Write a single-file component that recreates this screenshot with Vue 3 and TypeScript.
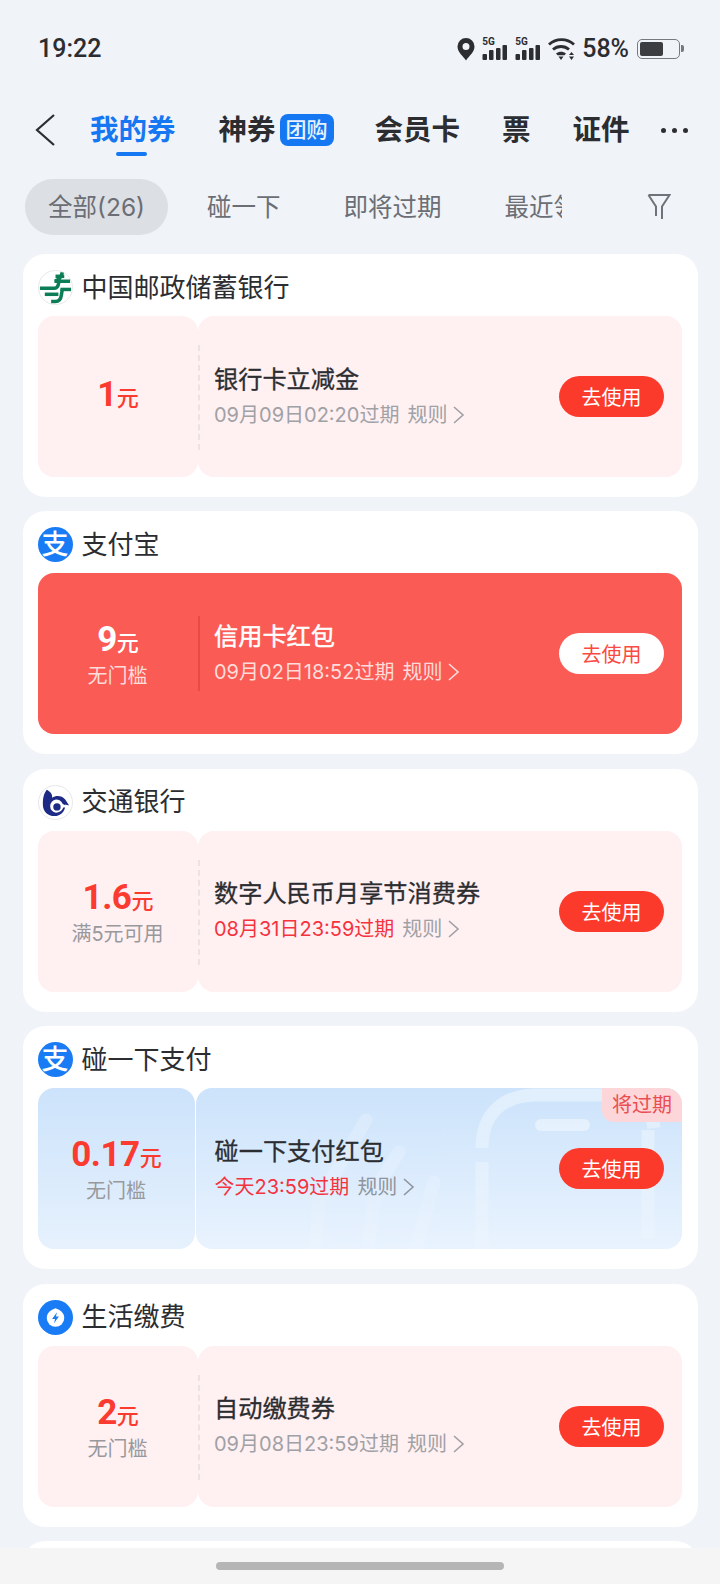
<script setup lang="ts">
interface Coupon {
  brand: string
  logo: 'psbc' | 'alipay' | 'bocom' | 'life'
  amount: string
  sub?: string
  title: string
  date: string
  urgent?: boolean
  theme: 'pink' | 'red' | 'blue'
  tag?: string
}

const tabs = ['碰一下', '即将过期', '最近领取']

const coupons: Coupon[] = [
  { brand: '中国邮政储蓄银行', logo: 'psbc', amount: '1', title: '银行卡立减金', date: '09月09日02:20过期', theme: 'pink' },
  { brand: '支付宝', logo: 'alipay', amount: '9', sub: '无门槛', title: '信用卡红包', date: '09月02日18:52过期', theme: 'red' },
  { brand: '交通银行', logo: 'bocom', amount: '1.6', sub: '满5元可用', title: '数字人民币月享节消费券', date: '08月31日23:59过期', urgent: true, theme: 'pink' },
  { brand: '碰一下支付', logo: 'alipay', amount: '0.17', sub: '无门槛', title: '碰一下支付红包', date: '今天23:59过期', urgent: true, theme: 'blue', tag: '将过期' },
  { brand: '生活缴费', logo: 'life', amount: '2', sub: '无门槛', title: '自动缴费券', date: '09月08日23:59过期', theme: 'pink' },
]
</script>

<template>
  <div class="page">
    <div class="status">
      <span class="time">19:22</span>
      <div class="status-right">
        <svg width="18" height="24" viewBox="0 0 18 24"><path fill-rule="evenodd" fill="#2b2d31" d="M9 1a8.500 8.500 0 0 1 8.500 8.500C17.500 15 12 19 9 23.500 6 19 .5 15 .5 9.500A8.500 8.500 0 0 1 9 1zm0 5a3.500 3.500 0 1 0 0 7 3.500 3.500 0 0 0 0-7z" /></svg>
        <div class="sim">
          <span class="sim-label">5G</span>
          <svg width="26" height="24" viewBox="0 0 26 24"><g fill="#2b2d31"><rect x="0.500" y="17" width="4.500" height="6" rx="1" /><rect x="7" y="13" width="4.500" height="10" rx="1" /><rect x="14" y="11" width="4.500" height="12" rx="1" /><rect x="20.500" y="8" width="4.500" height="15" rx="1" /></g></svg>
        </div>
        <div class="sim">
          <span class="sim-label">5G</span>
          <svg width="26" height="24" viewBox="0 0 26 24"><g fill="#2b2d31"><rect x="0.500" y="17" width="4.500" height="6" rx="1" /><rect x="7" y="13" width="4.500" height="10" rx="1" /><rect x="14" y="11" width="4.500" height="12" rx="1" /><rect x="20.500" y="8" width="4.500" height="15" rx="1" /></g></svg>
        </div>
        <svg width="27" height="24" viewBox="0 0 27 24"><g fill="none" stroke="#2b2d31" stroke-width="2.800"><path d="M1 7.500c7-6.500 18-6.500 25 0" /><path d="M5 12.500c4.500-4 11.500-4 16 0" /></g><path fill="#2b2d31" d="M8 16.500c3-2.300 7-2.300 10 0l-1.500 1.800h-7zM10.500 19.500h5L13 23zM21 18l2.500-3 2.500 3zM21 19.500h5L23.500 23z" /></svg>
        <span class="pct">58%</span>
        <div class="battery">
          <div class="battery-fill"></div>
        </div>
      </div>
    </div>

    <div class="nav">
      <svg class="back" width="22" height="34" viewBox="0 0 22 34"><path d="M20 2 3 17l17 15" fill="none" stroke="#2b2d31" stroke-width="2.200" /></svg>
      <div class="nav-item active">
        我的券
        <span class="nav-line"></span>
      </div>
      <div class="nav-item god">神券<span class="nav-badge">团购</span></div>
      <div class="nav-item member">会员卡</div>
      <div class="nav-item ticket">票</div>
      <div class="nav-item cert">证件</div>
      <div class="dots"><i></i><i></i><i></i></div>
    </div>

    <div class="filters">
      <div class="filter-scroll">
        <span class="chip on">全部(26)</span>
        <span v-for="t in tabs" :key="t" class="chip">{{ t }}</span>
      </div>
      <svg class="funnel" width="24" height="28" viewBox="0 0 24 28"><path d="M1.500 2h21L15 13.500V26M9 23V13.500L1.500 2" fill="none" stroke="#6f7278" stroke-width="2" /></svg>
    </div>

    <div class="list">
      <section v-for="c in coupons" :key="c.title" class="card">
        <header class="brand">
          <svg v-if="c.logo === 'psbc'" class="logo" viewBox="0 0 36 36">
            <circle cx="18" cy="18" r="17.500" fill="#fff" stroke="#e4e6e8" />
            <g fill="none" stroke="#0c7d55" stroke-width="3.600">
              <path d="M18 6.500H27" />
              <path d="M25 2.500C24 7 22 10.500 17 11.500H33" />
              <path d="M2 18.700H17C20 18.700 21 16 21.500 12" />
              <path d="M7 25H21" />
              <path d="M23 20H34" />
              <path d="M13.500 32.500H18C22 32.500 23.500 30 24 26L25 20" />
            </g>
          </svg>
          <div v-else-if="c.logo === 'alipay'" class="logo alipay">支</div>
          <svg v-else-if="c.logo === 'bocom'" class="logo" viewBox="0 0 36 36">
            <circle cx="18" cy="18" r="17.500" fill="#fff" stroke="#e4e6e8" />
            <path fill="#1d2a86" d="M9 5c4 2 6 5 5.500 8 4-2.500 10-2.500 13.500 2l4 6-4-1c.5 7-5 12-11 12-7 0-12-5-12-12C5 13 6 9 9 5z" />
            <path fill="#fff" d="M18.500 15c3 0 5.500 1.500 7 4.500L32 23l-6 .2c-1 3.300-4 5.300-7.500 5.300a6.800 6.800 0 0 1 0-13.500z" />
            <circle cx="19.500" cy="22.500" r="3.800" fill="#1d2a86" />
          </svg>
          <svg v-else class="logo" viewBox="0 0 36 36">
            <circle cx="18" cy="18" r="18" fill="#1a7cf5" />
            <path fill="#fff" d="M18 8.500c5 1.500 9 5 9 10a9 9 0 0 1-18 0c0-5 4-8.500 9-10z" />
            <path fill="#1a7cf5" d="M19.500 12.500 14.500 19.500h3l-1 4.500 5-7h-3z" />
          </svg>
          <span class="brand-name">{{ c.brand }}</span>
        </header>

        <div class="coupon" :class="'theme-' + c.theme">
          <div class="stub" :class="{ 'has-sub': c.sub }">
            <div class="amount"><b>{{ c.amount }}</b><span>元</span></div>
            <div v-if="c.sub" class="sub">{{ c.sub }}</div>
          </div>
          <div class="main">
            <svg v-if="c.theme === 'blue'" class="wm" width="486" height="161" viewBox="0 0 486 161">
              <defs>
                <linearGradient id="fade" gradientUnits="userSpaceOnUse" x1="0" y1="0" x2="0" y2="161">
                  <stop offset="0" stop-color="#fff" stop-opacity=".42" />
                  <stop offset="1" stop-color="#fff" stop-opacity=".1" />
                </linearGradient>
              </defs>
              <g fill="none" stroke="url(#fade)" stroke-width="13">
                <path d="M286 60C286 25 308 7 340 7H420C446 7 456 22 458 40" />
                <path d="M286 74V161" />
                <path d="M452 42V150" />
                <g opacity=".6" stroke-linecap="round" stroke-linejoin="round">
                  <path d="M170 32 123 112 119 161" />
                  <path d="M203 64 180 100 172 161" />
                  <path d="M238 94 222 152 218 161" />
                </g>
              </g>
              <rect x="339" y="31" width="55" height="12" rx="6" fill="#fff" fill-opacity=".42" />
            </svg>
            <div class="info">
              <div class="title">{{ c.title }}</div>
              <div class="meta">
                <span class="date" :class="{ urgent: c.urgent }">{{ c.date }}</span>
                <span class="rule">规则</span>
                <svg class="chev" width="13" height="20" viewBox="0 0 13 20"><path d="m2 2 9 8-9 8" fill="none" stroke="currentColor" stroke-width="1.600" /></svg>
              </div>
            </div>
            <button class="use">去使用</button>
            <span v-if="c.tag" class="tag">{{ c.tag }}</span>
          </div>
        </div>
      </section>
      <section class="card"></section>
    </div>

    <div class="home-bar"><span></span></div>
  </div>
</template>

<style>
html, body { margin: 0; background: #f0f3f8; }
</style>

<style scoped>
.page {
  position: relative;
  width: 720px;
  height: 1584px;
  overflow: hidden;
  background: #f0f3f8;
  font-family: Inter, "Noto Sans CJK SC", sans-serif;
  color: #2b2d31;
}
.status {
  height: 96px;
  box-sizing: border-box;
  padding: 35px 37px 0 38px;
  display: flex;
  justify-content: space-between;
  align-items: flex-start;
}
.time { font: 500 25px/28px Roboto, sans-serif; }
.status-right { display: flex; align-items: center; gap: 7px; height: 28px; }
.sim { position: relative; width: 26px; height: 24px; }
.sim svg { display: block; }
.sim-label {
  position: absolute;
  left: 0;
  top: 0;
  font: 700 10px/10px Roboto, sans-serif;
}
.pct { font: 500 25px/28px Roboto, sans-serif; margin-right: 1px; }
.battery {
  position: relative;
  width: 43px;
  height: 20px;
  box-sizing: border-box;
  border: 1.500px solid #77797e;
  border-radius: 5px;
  padding: 2px;
  margin-right: 3px;
}
.battery::after {
  content: "";
  position: absolute;
  right: -5px;
  top: 5px;
  width: 3px;
  height: 7px;
  border-radius: 0 2px 2px 0;
  background: #77797e;
}
.battery-fill { width: 23px; height: 100%; background: #3c3d41; border-radius: 2px; }

.nav {
  height: 68px;
  padding-left: 34px;
  display: flex;
  align-items: center;
  position: relative;
  box-sizing: border-box;
}
.back { margin-right: 34px; }
.nav-item {
  position: relative;
  font-size: 28.500px;
  font-weight: 700;
  line-height: 36px;
  white-space: nowrap;
  display: flex;
  align-items: center;
}
.nav-item.active { color: #1677f2; }
.nav-line {
  position: absolute;
  left: 26px;
  top: 40px;
  width: 31px;
  height: 4px;
  border-radius: 2px;
  background: #1677f2;
}
.god { margin-left: 43px; }
.nav-badge {
  margin-left: 4px;
  width: 54px;
  height: 32px;
  border-radius: 8px;
  background: #1677f2;
  color: #e8f2ff;
  font-size: 21px;
  font-weight: 500;
  line-height: 32px;
  text-align: center;
}
.member { margin-left: 41px; }
.ticket { margin-left: 42px; }
.cert { margin-left: 42px; }
.dots { display: flex; gap: 6px; margin-left: 31px; }
.dots i { width: 5px; height: 5px; border-radius: 50%; background: #2b2d31; }

.filters {
  height: 56px;
  margin-top: 15px;
  padding-left: 25px;
  display: flex;
  align-items: center;
}
.filter-scroll {
  width: 537px;
  display: flex;
  gap: 15px;
  overflow: hidden;
  flex-shrink: 0;
}
.chip {
  flex-shrink: 0;
  height: 56px;
  line-height: 57px;
  padding: 0 24px;
  border-radius: 28px;
  font-size: 24.500px;
  color: #6b6e74;
  font-family: Inter, "Noto Sans CJK SC", sans-serif;
}
.chip.on { background: #dcdfe4; padding: 0 23px; }
.funnel { margin-left: 85px; }

.list {
  padding: 19px 22px 0 22.500px;
  display: flex;
  flex-direction: column;
  gap: 14.400px;
}
.card {
  background: #fff;
  border-radius: 22px;
  padding: 0 16px 20px 15px;
  min-height: 242px;
  box-sizing: border-box;
}
.brand {
  height: 62px;
  box-sizing: border-box;
  padding-top: 5px;
  display: flex;
  align-items: center;
  gap: 9px;
}
.logo { width: 35px; height: 35px; flex-shrink: 0; display: block; }
.alipay {
  border-radius: 50%;
  background: #1a7cf5;
  color: #fff;
  font-size: 27px;
  font-weight: 500;
  line-height: 35px;
  text-align: center;
}
.brand-name { font-size: 26px; line-height: 36px; font-weight: 400; color: #2b2d31; }

.coupon {
  display: flex;
  height: 161px;
  position: relative;
}
.stub {
  width: 160px;
  flex-shrink: 0;
  box-sizing: border-box;
  border-radius: 16px;
  display: flex;
  flex-direction: column;
  align-items: center;
  justify-content: center;
  color: #fb3a30;
}
.stub.has-sub { padding-top: 3px; }
.main {
  flex: 1;
  position: relative;
  overflow: hidden;
  border-radius: 16px;
  display: flex;
  align-items: center;
  justify-content: space-between;
  padding: 0 18px 0 16.500px;
}
.amount { display: flex; align-items: baseline; line-height: 40px; padding-left: 1px; }
.amount b { font: 700 35px/40px Roboto, sans-serif; letter-spacing: -0.500px; }
.amount span { font-size: 22px; font-weight: 500; }
.sub { font-size: 20px; line-height: 28px; color: #98999d; margin-top: -1px; }
.info { position: relative; padding-bottom: 2px; }
.title { font-size: 24.200px; line-height: 34px; font-weight: 400; color: #2b2d31; -webkit-text-stroke: 0.300px #2b2d31; }
.meta {
  display: flex;
  align-items: center;
  margin-top: 4px;
  font-size: 20px;
  line-height: 28px;
  color: #a0a1a5;
}
.urgent { color: #f5333f; }
.rule { margin-left: 8px; }
.chev { margin-left: 5px; }
.use {
  position: relative;
  width: 105px;
  height: 41px;
  border: 0;
  border-radius: 21px;
  background: #fc3a2b;
  color: #fff;
  font-family: "Noto Sans CJK SC", sans-serif;
  font-size: 20px;
  line-height: 41px;
  padding: 0;
}
.tag {
  position: absolute;
  right: 0;
  top: 0;
  width: 80px;
  height: 34px;
  background: #fdd6d9;
  color: #ea4d52;
  font-size: 20px;
  line-height: 34px;
  text-align: center;
  border-bottom-left-radius: 12px;
}
.wm { position: absolute; left: 0; top: 0; }

.theme-pink .stub, .theme-pink .main { background: #fff0f2; }
.theme-pink .main::before {
  content: "";
  position: absolute;
  left: 0;
  top: 29px;
  height: 105px;
  border-left: 2px dashed #ebe2e5;
}
.theme-red { background: #fb5b55; border-radius: 16px; }
.theme-red .stub { color: #fff; }
.theme-red .sub { color: #ffdcd9; }
.theme-red .main { overflow: visible; }
.theme-red .main::before {
  content: "";
  position: absolute;
  left: 0;
  top: 43px;
  height: 75px;
  border-left: 2px solid #e84a45;
}
.theme-red .title { color: #fff; -webkit-text-stroke: 0.500px #fff; }
.theme-red .meta { color: #ffdcd9; }
.theme-red .use { background: #fff; color: #fb4a42; }
.theme-blue { gap: 1px; }
.theme-blue .stub { width: 157px; background: linear-gradient(#cce3fb, #e6f1fd); }
.theme-blue .main { background: linear-gradient(#cce3fb, #e9f3fe); padding-left: 19px; }
.theme-blue .meta { color: #8f959d; }

.home-bar {
  position: absolute;
  left: 0;
  right: 0;
  bottom: 0;
  height: 36px;
  background: #f5f5f5;
}
.home-bar span {
  position: absolute;
  left: 216px;
  top: 14px;
  width: 288px;
  height: 8px;
  border-radius: 4px;
  background: #b5b5b5;
}
</style>
